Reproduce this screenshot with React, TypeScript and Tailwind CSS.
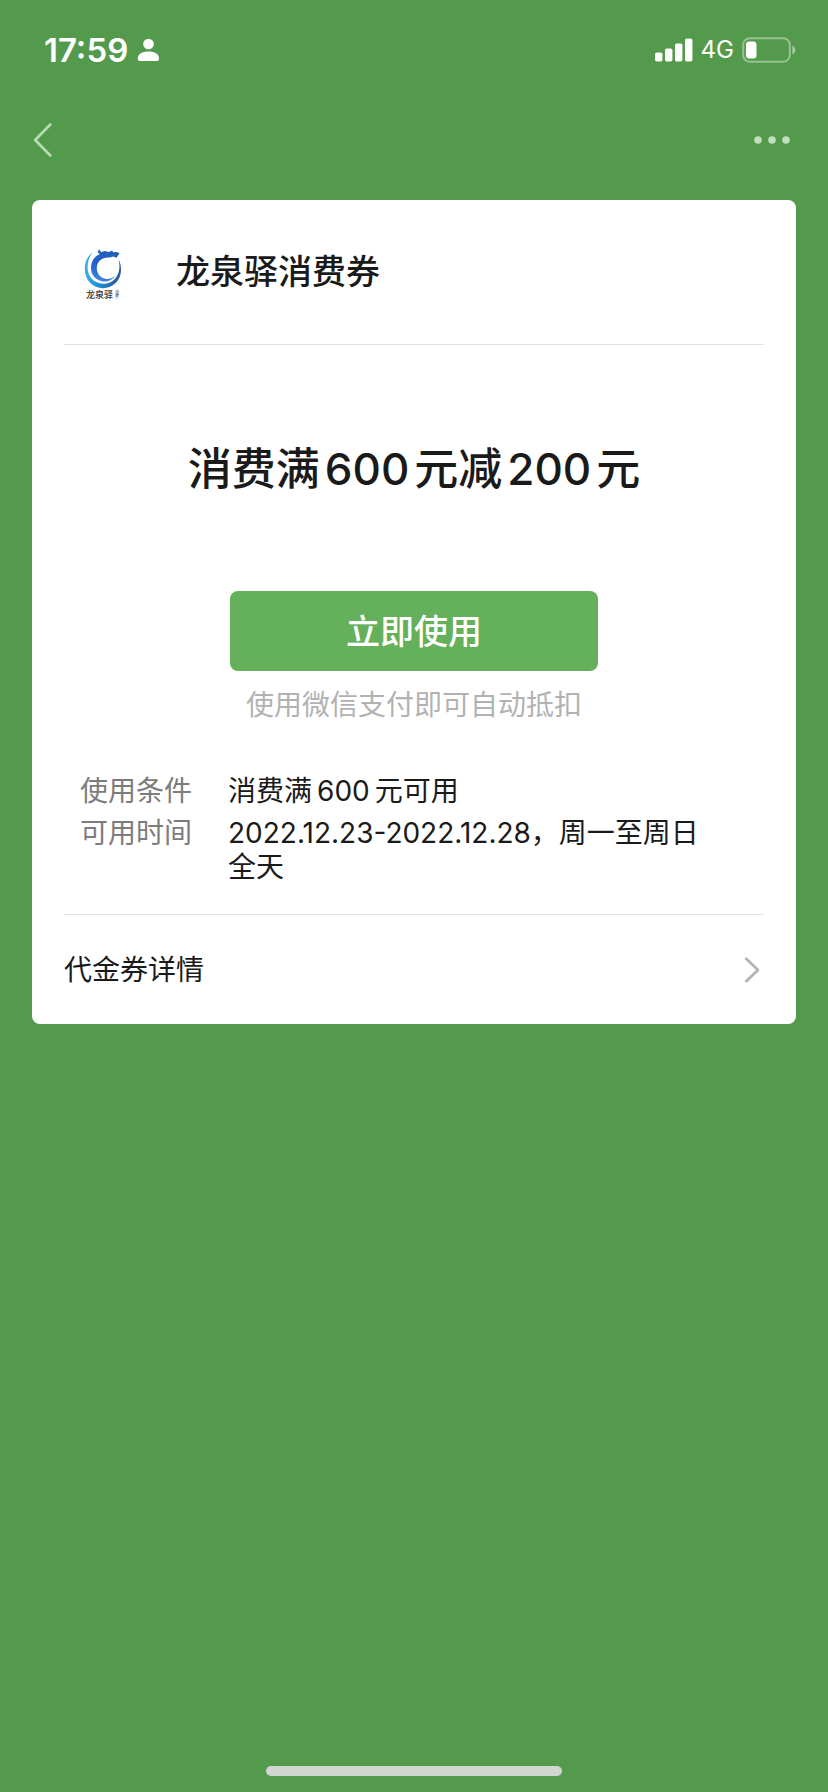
import React from 'react';

function StatusBar() {
  return (
    <header className="flex h-[100px] items-center justify-between pl-11 pr-8 text-white">
      <div className="flex items-center gap-2">
        <time className="text-[33px] leading-10 font-semibold">17:59</time>
        <svg className="h-6 w-6" viewBox="0 0 24 24" fill="currentColor" aria-hidden="true">
          <circle cx="12.5" cy="6" r="5.3" />
          <path d="M1.8 20.2C1.8 16 6.2 13.4 12.5 13.4S23 16 23 20.2C23 22.2 22.2 23 20.6 23H4.2C2.6 23 1.8 22.2 1.8 20.2Z" />
        </svg>
      </div>
      <div className="flex items-center gap-2">
        <svg className="h-6 w-[38px]" viewBox="0 0 38 24" fill="currentColor" aria-hidden="true">
          <rect x="0" y="14.5" width="7.4" height="9" rx="1.8" />
          <rect x="10" y="10.5" width="7.4" height="13" rx="1.8" />
          <rect x="20" y="5.5" width="7.4" height="18" rx="1.8" />
          <rect x="30" y="0.5" width="7.4" height="23" rx="1.8" />
        </svg>
        <span className="text-2xl leading-8">4G</span>
        <svg className="h-[26px] w-[54px]" viewBox="0 0 54 26" fill="none" aria-hidden="true">
          <rect x="1.2" y="1.2" width="46.6" height="23.6" rx="6.6" stroke="#fff" strokeOpacity="0.4" strokeWidth="2" />
          <rect x="4" y="4.5" width="10.5" height="17" rx="3.2" fill="#fff" />
          <path d="M50.4 8.8C52.2 9.6 53.4 11.2 53.4 13S52.2 16.4 50.4 17.2Z" fill="#fff" fillOpacity="0.5" />
        </svg>
      </div>
    </header>
  );
}

function NavBar() {
  return (
    <nav className="flex h-20 items-center justify-between px-8">
      <button type="button" aria-label="返回" className="text-[#b9dcb5]">
        <svg className="h-9 w-5" viewBox="0 0 20 36" fill="none" stroke="currentColor" strokeWidth="2.6" strokeLinecap="round" strokeLinejoin="round">
          <path d="M18.3 2.5L3.2 18L18.3 33.5" />
        </svg>
      </button>
      <button type="button" aria-label="更多" className="text-[#c0dfbc]">
        <svg className="h-9 w-11" viewBox="0 0 44 36" fill="currentColor">
          <circle cx="6" cy="18" r="3.8" />
          <circle cx="20" cy="18" r="3.8" />
          <circle cx="34" cy="18" r="3.8" />
        </svg>
      </button>
    </nav>
  );
}

function MerchantLogo() {
  return (
    <svg className="h-16 w-12" viewBox="0 0 48 64" role="img" aria-label="龙泉驿">
      <defs>
        <linearGradient id="ring" x1="0" y1="0.2" x2="1" y2="0.4">
          <stop offset="0" stopColor="#3fb4e6" />
          <stop offset="0.45" stopColor="#2196dc" />
          <stop offset="1" stopColor="#2a5a9e" />
        </linearGradient>
        <linearGradient id="dragon" x1="0.2" y1="1" x2="0.5" y2="0">
          <stop offset="0" stopColor="#4a86dc" />
          <stop offset="0.5" stopColor="#1f62cf" />
          <stop offset="1" stopColor="#2260b4" />
        </linearGradient>
      </defs>
      <path d="M12.5 12.5C7.5 16 4.8 22 4.8 29C4.8 40 12.8 48.2 23 48.2C33.3 48.2 41 40 41 30C41 26 40.2 22.3 38.6 19.2C39.2 22 39.6 25 39.4 28C38.8 37 32.2 43.8 24 43.8C14.5 43.8 7.6 37 7.6 27.5C7.6 21.5 9.4 16.5 12.5 12.5Z" fill="url(#ring)" />
      <path d="M19 9.2L21.2 12.2L24.5 11L29 12L32 10.6L33.2 12.2L36.5 12L39.6 13.2L38.2 15.2L36.6 17.8L33.2 16.6L29.6 17.6C21.8 17 16.6 21.8 16.8 28.6C17 34.6 21.2 38.6 26.4 39C29.8 39.2 33 38 35.4 35.8C32.2 40.4 27.6 42 23 41.4C15.6 40.4 10.8 34.8 11 27.6C11.2 21.4 14.4 16.4 19.8 14L17.6 12.2Z" fill="url(#dragon)" />
      <text x="6" y="58" fontSize="9" fontWeight="500" fill="#333">龙泉驿</text>
      <text x="35" y="54" fontSize="4" fill="#333">消</text>
      <text x="35" y="58" fontSize="4" fill="#333">费</text>
    </svg>
  );
}

function Condition({ label, children }: { label: string; children: React.ReactNode }) {
  return (
    <div className="flex">
      <dt className="w-37 shrink-0 text-[#7c7c7c]">{label}</dt>
      <dd className="min-w-0 flex-1 text-[#1a1a1a]">{children}</dd>
    </div>
  );
}

export default function App() {
  return (
    <div className="flex min-h-screen flex-col bg-[#549a4c] font-['Inter','Noto_Sans_CJK_SC',sans-serif]" lang="zh-CN">
      <StatusBar />
      <NavBar />
      <main className="flex-1 px-8 pt-5">
        <article className="rounded-lg bg-white px-8">
          <div className="flex h-36 items-center gap-12 pl-4">
            <MerchantLogo />
            <h1 className="text-[34px] leading-12 font-medium text-[#1a1a1a]">龙泉驿消费券</h1>
          </div>
          <section className="border-y border-[#e3e3e3] pt-23 pb-[30px]">
            <h2 className="text-center text-[44px] leading-16 font-medium text-[#1a1a1a]">
              消费满<span className="mx-[5px]">600</span>元减<span className="mx-[5px]">200</span>元
            </h2>
            <div className="mt-[90px] text-center">
              <button type="button" className="h-20 w-92 rounded-lg bg-[#65b05b] text-[34px] font-medium text-white">
                立即使用
              </button>
              <p className="mt-[17px] text-[28px] leading-[34px] text-[#b2b2b2]">使用微信支付即可自动抵扣</p>
            </div>
            <dl className="mt-13 flex flex-col gap-2 pr-12 pl-4 text-[28px] leading-[34px]">
              <Condition label="使用条件">
                消费满<span className="mx-[5px]">600</span>元可用
              </Condition>
              <Condition label="可用时间">2022.12.23-2022.12.28，周一至周日全天</Condition>
            </dl>
          </section>
          <a href="#details" className="flex h-[109px] items-center justify-between text-[28px] leading-10 text-[#1a1a1a]">
            代金券详情
            <svg className="h-7 w-6" viewBox="0 0 24 28" fill="none" stroke="#b4b4b4" strokeWidth="2.8" aria-hidden="true">
              <path d="M5.5 2L18 14L5.5 26" strokeLinejoin="round" />
            </svg>
          </a>
        </article>
      </main>
      <footer className="flex justify-center pb-4">
        <div className="h-[10px] w-74 rounded-full bg-[#d3d5d3]" />
      </footer>
    </div>
  );
}
